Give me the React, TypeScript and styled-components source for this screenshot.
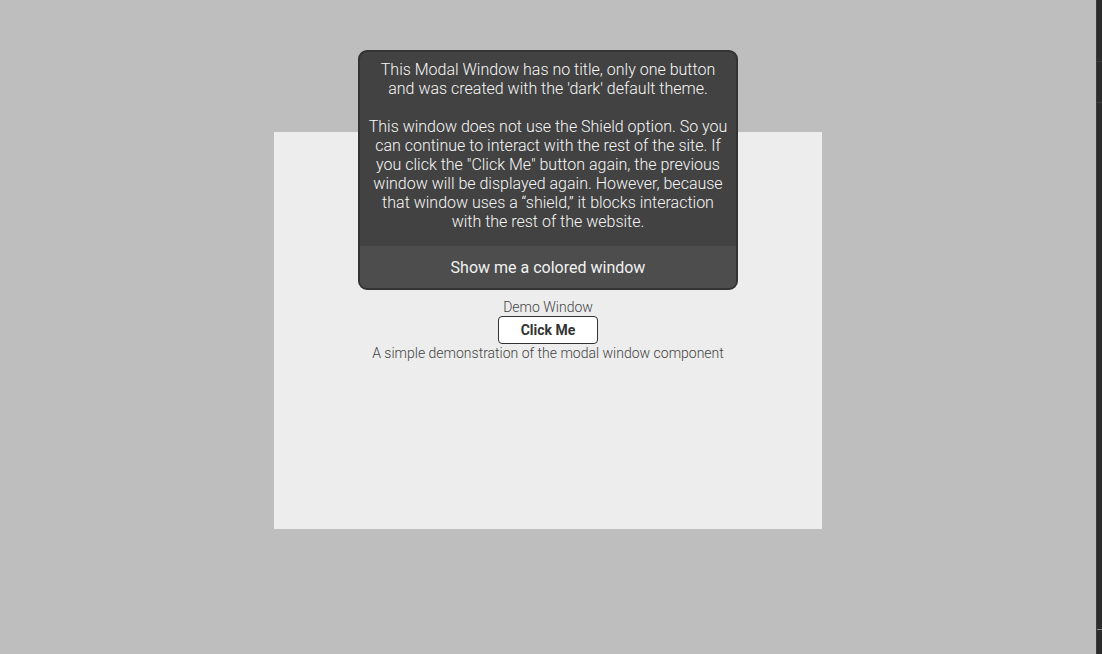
import React from "react";
import styled, { createGlobalStyle } from "styled-components";

const Global = createGlobalStyle`
  html, body { margin: 0; padding: 0; height: 100%; }
  body { font-family: Roboto, "Noto Sans", sans-serif; background: #bebebe; overflow: hidden; }
  #root { height: 100%; }
`;

const Page = styled.div`
  display: flex;
  height: 654px;
  width: 1102px;
`;

const Main = styled.main`
  position: relative;
  flex: 1;
  display: flex;
  justify-content: center;
  align-items: flex-start;
  padding-top: 132px;
  box-sizing: border-box;
`;

const SideStrip = styled.div`
  width: 6px;
  background: #2c2c2c;
  border-left: 1px solid #3a3a3a;
  box-sizing: border-box;
  display: flex;
  flex-direction: column;
`;

const StripSeg = styled.div<{ $h: number; $light?: boolean }>`
  height: ${(p) => p.$h}px;
  border-bottom: 1px solid ${(p) => (p.$light ? "#8a8a8a" : "#3d3d3d")};
  flex-shrink: 0;
`;

const Panel = styled.section`
  width: 548px;
  height: 397px;
  background: #ededed;
  display: flex;
  flex-direction: column;
  align-items: center;
  justify-content: center;
  gap: 1px;
  padding-bottom: 2px;
  box-sizing: border-box;
`;

const Caption = styled.div`
  font-weight: 300;
  font-size: 14px;
  line-height: 16px;
  color: #444;
`;

const ClickButton = styled.button`
  width: 100px;
  height: 28px;
  background: #fff;
  border: 1px solid #333;
  border-radius: 4px;
  font-family: Roboto, sans-serif;
  font-weight: 700;
  font-size: 14px;
  color: #333;
  cursor: pointer;
  margin: 0;
`;

const Modal = styled.div`
  position: absolute;
  top: 50px;
  left: 50%;
  transform: translateX(-50%);
  width: 380px;
  box-sizing: border-box;
  background: #424242;
  border: 2px solid #333;
  border-radius: 9px;
  overflow: hidden;
  display: flex;
  flex-direction: column;
`;

const ModalBody = styled.div`
  padding: 8px 8px 15px;
  color: #f7f7f7;
  font-weight: 300;
  font-size: 16px;
  line-height: 19px;
  text-align: center;
  display: flex;
  flex-direction: column;
  gap: 19px;
`;

const ModalText = styled.p`
  margin: 0;
`;

const ModalFooter = styled.button`
  height: 42px;
  border: none;
  background: #4d4d4d;
  color: #f2f2f2;
  font-family: Roboto, sans-serif;
  font-weight: 400;
  font-size: 16px;
  cursor: pointer;
  padding: 0;
`;

export default function App() {
  return (
    <>
      <Global />
      <Page>
        <Main>
          <Panel>
            <Caption>Demo Window</Caption>
            <ClickButton>Click Me</ClickButton>
            <Caption>A simple demonstration of the modal window component</Caption>
          </Panel>
          <Modal>
            <ModalBody>
              <ModalText>
                This Modal Window has no title, only one button and was created with the 'dark' default theme.
              </ModalText>
              <ModalText>
                This window does not use the Shield option. So you can continue to interact with the rest of the site. If you click the "Click Me" button again, the previous window will be displayed again. However, because that window uses a “shield,” it blocks interaction with the rest of the website.
              </ModalText>
            </ModalBody>
            <ModalFooter>Show me a colored window</ModalFooter>
          </Modal>
        </Main>
        <SideStrip>
          <StripSeg $h={61} />
          <StripSeg $h={40} />
          <StripSeg $h={526} $light />
        </SideStrip>
      </Page>
    </>
  );
}
